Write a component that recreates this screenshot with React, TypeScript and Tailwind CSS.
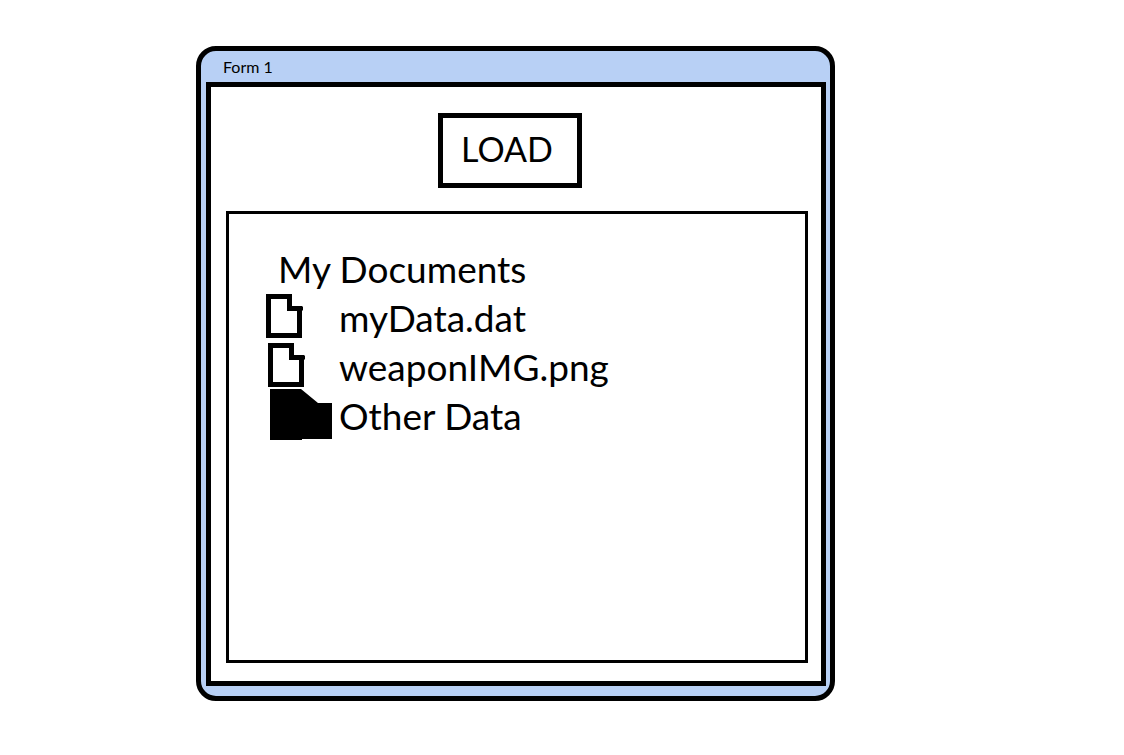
import React from "react";

function FileIcon() {
  return (
    <svg width="37" height="46" viewBox="0 0 37 46" aria-hidden="true">
      <path
        d="M2.5 2.5H23.5V14.5H33.5V41.5H2.5Z"
        fill="none"
        stroke="#000"
        strokeWidth="5"
      />
      <path d="M33 12h3l1 1v3l-1 1h-3z" fill="#000" />
    </svg>
  );
}

function FolderIcon() {
  return (
    <svg width="62" height="51" viewBox="0 0 62 51" aria-hidden="true">
      <path d="M0 0H31L48 14H62V50H32V51H0Z" fill="#000" />
    </svg>
  );
}

type Entry = { name: string; icon: React.ReactNode; indent: string };

const entries: Entry[] = [
  { name: "myData.dat", icon: <FileIcon />, indent: "pl-0" },
  { name: "weaponIMG.png", icon: <FileIcon />, indent: "pl-0.5" },
  { name: "Other Data", icon: <FolderIcon />, indent: "pl-1" },
];

export default function App() {
  return (
    <div className="min-h-screen bg-white pt-[46px] pb-12 pl-[196px] font-['Lato',sans-serif] text-black">
      <main className="w-full max-w-[639px] rounded-[20px] border-5 border-black bg-[#b8d0f5] pr-1 pb-2.5 pl-[5px]">
        <h1 className="h-[31px] pl-[17px] text-base leading-8">Form 1</h1>
        <div className="flex flex-col border-5 border-black bg-white pt-[26px] pr-[13px] pb-[18px] pl-[15px]">
          <button
            type="button"
            className="mr-3.5 h-[75px] w-36 self-center border-5 border-black pr-1.5 pb-1 text-[34px]"
          >
            LOAD
          </button>
          <section className="mt-[23px] min-h-[452px] border-3 border-black pt-[29px] pl-[37px] text-[37px] leading-[49px]">
            <h2 className="h-[49px] pt-px pl-3">My Documents</h2>
            <ul>
              {entries.map((entry) => (
                <li key={entry.name} className="flex h-[49px] items-center">
                  <span className={`w-[73px] shrink-0 ${entry.indent}`}>
                    {entry.icon}
                  </span>
                  <span className="pt-0.5">{entry.name}</span>
                </li>
              ))}
            </ul>
          </section>
        </div>
      </main>
    </div>
  );
}
